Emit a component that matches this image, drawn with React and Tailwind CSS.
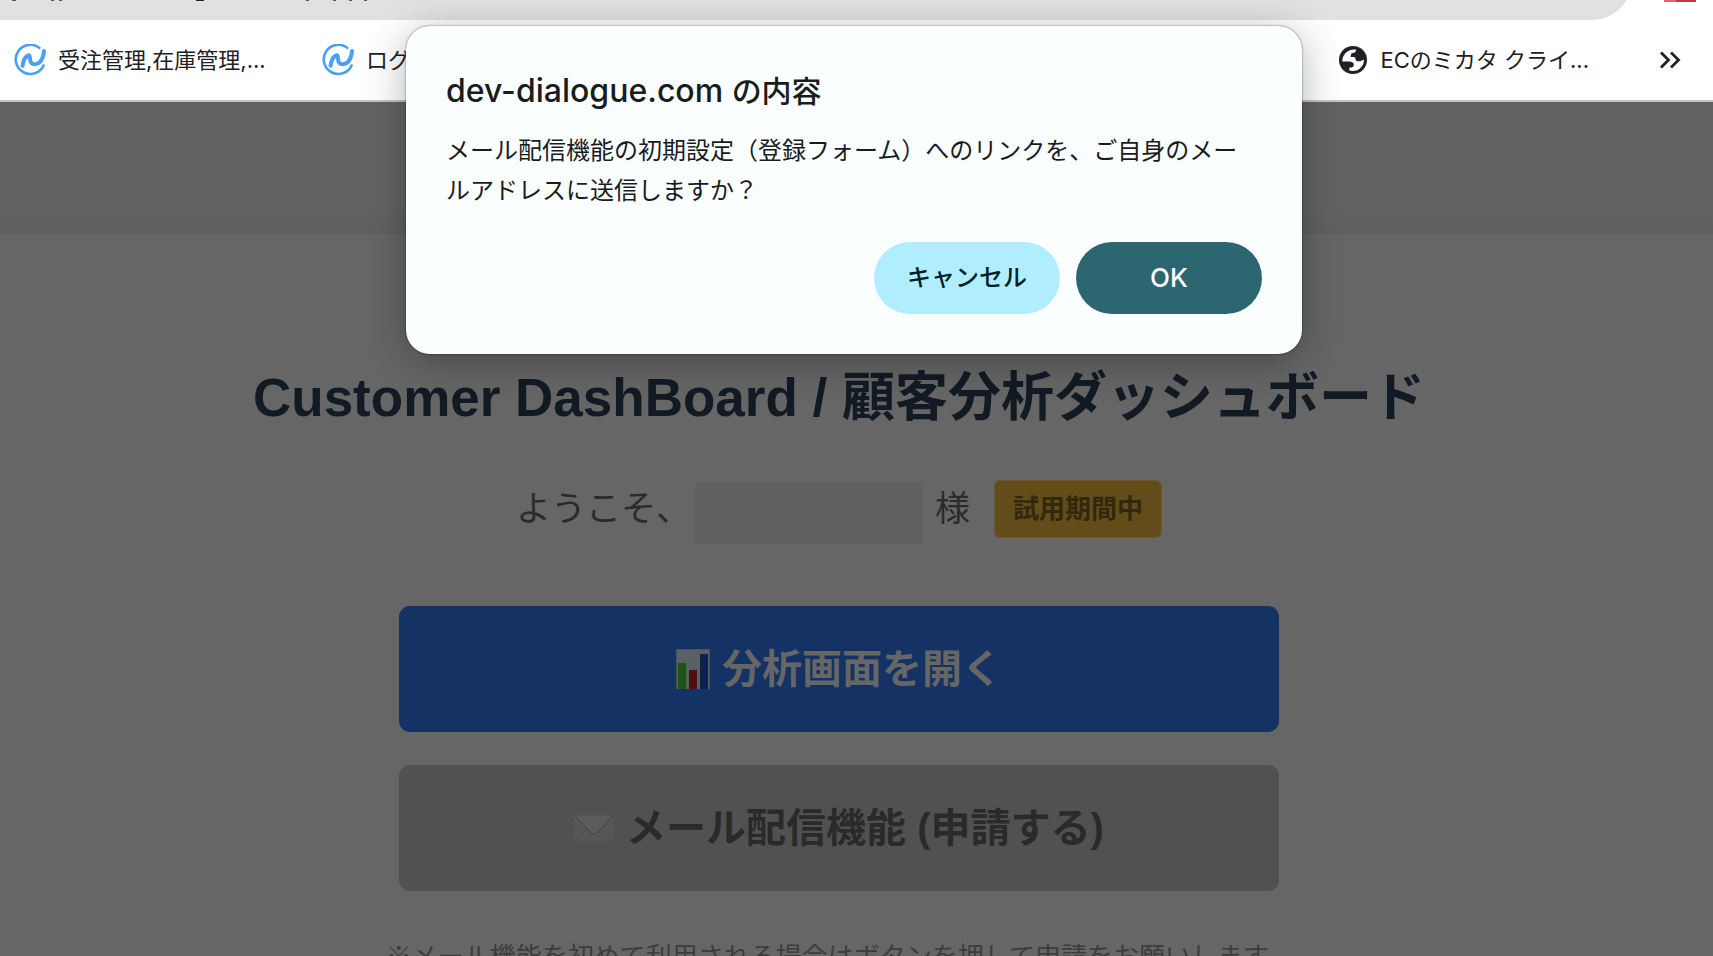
import React from "react";

const jp = "font-['Inter','Noto_Sans_CJK_JP',sans-serif]";
const page = "font-['Liberation_Sans','Noto_Sans_CJK_JP',sans-serif]";

function SwirlIcon() {
  return (
    <svg className="size-8 shrink-0" viewBox="0 0 32 32" fill="none" stroke="#4a9ff9" strokeLinecap="round" strokeLinejoin="round" aria-hidden="true">
      <path d="M26.2 4.6A14.6 14.6 0 1 0 30 20.5" strokeWidth="2.6" strokeLinecap="butt" />
      <path d="M8.6 21.8C9.2 16.5 11.6 12 14.8 11.2C16.6 11 15.2 16.5 17.2 18.8C19.4 21.2 24 20.4 26.4 17.4C28.6 14.8 29.6 11 30 7" strokeWidth="4" />
    </svg>
  );
}

function GlobeIcon() {
  return (
    <svg className="size-7 shrink-0" viewBox="0 0 28 28" aria-hidden="true">
      <circle cx="14" cy="14" r="14" fill="#202124" />
      <path d="M3.4 15.6C2.8 9.2 8.6 2.6 17 3.5C17.2 5.6 16 6.8 13.8 7C11.6 7.2 12.4 8.6 11.6 10.9H14.6C16.6 11 16.6 12.6 16.9 14.6C17.6 15.8 22 15.6 24.9 13.4C25.4 20.4 18.6 26.6 10.4 24.6V21.6C13.4 21.7 14.8 20.8 14.9 18.4C14.6 16.4 12.6 15.8 10.2 15.6Z" fill="#fff" />
    </svg>
  );
}

function ChartIcon() {
  return (
    <svg className="h-10 w-[34px] shrink-0" viewBox="0 0 34 40" aria-hidden="true">
      <rect width="34" height="40" fill="#4b5156" />
      <rect x="1" y="1" width="32" height="39" fill="#596066" />
      <rect x="2" y="14" width="8" height="26" fill="#22521b" />
      <rect x="13" y="21" width="8" height="19" fill="#4d0f10" />
      <rect x="24" y="5" width="8" height="35" fill="#0c234f" />
    </svg>
  );
}

function EnvelopeIcon() {
  return (
    <svg className="h-[26px] w-10 shrink-0" viewBox="0 0 40 26" fill="none" aria-hidden="true">
      <rect width="40" height="26" rx="1" fill="#575757" />
      <path d="M1 25L14 13M39 25L26 13" stroke="#4b4b4b" />
      <path d="M1 1L16 17Q20 21 24 17L39 1" fill="#5b5b5b" stroke="#404040" />
    </svg>
  );
}

export default function App() {
  return (
    <div className={`relative flex h-screen flex-col overflow-hidden bg-[#666] ${page}`}>
      <div className="flex h-5 shrink-0 items-end justify-between overflow-hidden bg-white pr-[17px]">
        <div className="mr-8 flex h-20 flex-1 items-end rounded-r-full bg-[#e1e1e1]">
          <svg className="h-5 w-[400px]" viewBox="0 0 400 20" aria-hidden="true">
            <path d="M12 0h4M51 0h3M59 0h3M306 0h3M333 0h3M349 0h3M364 0h3" stroke="#555" strokeWidth="2" />
            <path d="M196 0h8" stroke="#222" strokeWidth="2" />
          </svg>
        </div>
        <div className="flex h-[2px] w-8 self-start">
          <div className="w-3 bg-[#e95f74]" />
          <div className="flex-1 bg-[#c73643]" />
        </div>
      </div>

      <nav className={`flex h-[82px] shrink-0 items-center border-b-2 border-[#c4c4c4] bg-white pr-8 pl-[14px] text-[22px] text-[#202124] ${jp}`}>
        <a href="#orders" className="flex w-[308px] items-center gap-3">
          <SwirlIcon />
          <span>受注管理,在庫管理,...</span>
        </a>
        <a href="#login" className="flex items-center gap-3">
          <SwirlIcon />
          <span>ログイン</span>
        </a>
        <a href="#ec" className="ml-auto flex items-center gap-[14px]">
          <GlobeIcon />
          <span>ECのミカタ クライ...</span>
        </a>
        <button type="button" aria-label="その他のブックマーク" className="ml-[70px]">
          <svg className="h-5 w-[22px]" viewBox="0 0 22 20" fill="none" stroke="#202124" strokeWidth="2.8" aria-hidden="true">
            <path d="M2 2.5L9.5 10L2 17.5M12 2.5L19.5 10L12 17.5" />
          </svg>
        </button>
      </nav>

      <header className="h-[132px] shrink-0 bg-linear-to-b from-[#636363] from-80% to-[#606060]" />

      <main className="flex flex-1 flex-col items-center pt-32 pr-[35px]">
        <h1 className="text-[53px] leading-[72px] font-bold whitespace-nowrap text-[#121a24]">
          Customer DashBoard / 顧客分析ダッシュボード
        </h1>
        <div className="mt-[46px] flex h-16 items-start text-[35px] leading-[58px] whitespace-nowrap text-[#2b2b2b]">
          <span>ようこそ、</span>
          <span className="mt-0.5 ml-1 h-[62px] w-[228px] bg-[#606060]" />
          <span className="ml-3">様</span>
          <span className="ml-6 flex h-[58px] items-center rounded-md border border-[#6b5a2c] bg-[#614c1a] px-[18px] text-[26px] font-bold text-[#33280d]">
            試用期間中
          </span>
        </div>
        <div className="mt-[62px] flex w-[880px] flex-col gap-[33px] text-[40px] font-bold">
          <button type="button" className="flex h-[126px] items-center justify-center gap-3 rounded-[11px] bg-[#143264] text-[#666]">
            <ChartIcon />
            分析画面を開く
          </button>
          <button type="button" className="flex h-[126px] items-center justify-center gap-3 rounded-[11px] bg-[#515151] text-[#2a2a2a]">
            <EnvelopeIcon />
            メール配信機能 (申請する)
          </button>
        </div>
        <p className="mt-12 text-[26px] leading-9 whitespace-nowrap text-[#3d3d3d]">
          ※メール機能を初めて利用される場合はボタンを押して申請をお願いします。
        </p>
      </main>

      <div className="absolute inset-x-0 top-[26px] flex justify-center pr-[5px]">
        <div role="dialog" aria-labelledby="dialog-title" className={`w-[896px] rounded-3xl bg-[#fafeff] px-10 pt-[43px] pb-10 text-[#191c1d] shadow-[0_0_2px_rgba(0,0,0,0.6),0_8px_40px_rgba(0,0,0,0.3)] ${jp}`}>
          <h2 id="dialog-title" className="text-[32px] leading-[44px] font-medium">
            dev-dialogue.com <span className="text-[30px]">の内容</span>
          </h2>
          <p className="mt-[18px] pr-2 text-2xl leading-10">
            メール配信機能の初期設定（登録フォーム）へのリンクを、ご自身のメールアドレスに送信しますか？
          </p>
          <div className="mt-[31px] flex justify-end gap-4 text-2xl font-medium">
            <button type="button" className="h-[72px] w-[186px] rounded-full bg-[#b0eeff] text-[#001f26]">キャンセル</button>
            <button type="button" className="h-[72px] w-[186px] rounded-full bg-[#2b6671] text-[26px] text-white">OK</button>
          </div>
        </div>
      </div>
    </div>
  );
}
